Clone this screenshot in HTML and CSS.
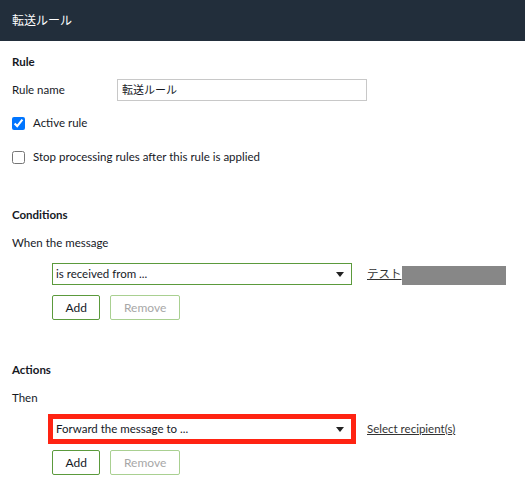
FILE: index.html
```html
<!DOCTYPE html>
<html lang="ja">
<head>
<meta charset="utf-8">
<title>転送ルール</title>
<link rel="stylesheet" href="styles.css">
</head>
<body>
<header class="topbar">転送ルール</header>
<main class="content">
  <section class="section first">
    <h2 class="heading">Rule</h2>
    <div class="field-row">
      <span class="field-label">Rule name</span>
      <div class="text-input">転送ルール</div>
    </div>
    <label class="check-row check-first">
      <input type="checkbox" class="check" checked>
      <span>Active rule</span>
    </label>
    <label class="check-row check-second">
      <input type="checkbox" class="check">
      <span>Stop processing rules after this rule is applied</span>
    </label>
  </section>

  <section class="section">
    <h2 class="heading">Conditions</h2>
    <p class="prompt">When the message</p>
    <div class="clause">
      <div class="select-row">
        <div class="select">
          <span>is received from ...</span>
          <svg class="caret" width="8" height="5" viewBox="0 0 8 5"><path d="M0 0H8L4 5Z" fill="#222"/></svg>
        </div>
        <a class="link" href="#">テスト</a><span class="redact"></span>
      </div>
      <div class="buttons">
        <button class="btn">Add</button>
        <button class="btn disabled">Remove</button>
      </div>
    </div>
  </section>

  <section class="section">
    <h2 class="heading">Actions</h2>
    <p class="prompt">Then</p>
    <div class="clause">
      <div class="select-row">
        <div class="select highlighted">
          <span>Forward the message to ...</span>
          <svg class="caret" width="8" height="5" viewBox="0 0 8 5"><path d="M0 0H8L4 5Z" fill="#222"/></svg>
        </div>
        <a class="link" href="#">Select recipient(s)</a>
      </div>
      <div class="buttons">
        <button class="btn">Add</button>
        <button class="btn disabled">Remove</button>
      </div>
    </div>
  </section>
</main>
</body>
</html>
```

FILE: styles.css
```css
* { box-sizing: border-box; }
html, body { margin: 0; padding: 0; background: #fff; }
body {
  font-family: Lato, "Noto Sans CJK JP", sans-serif;
  font-size: 11.5px;
  line-height: 16px;
  color: #16191f;
}
.topbar {
  height: 41px;
  background: #222e3b;
  color: #fff;
  font-size: 12px;
  display: flex;
  align-items: center;
  padding-left: 12px;
}
.content { padding: 0 12px; }
.section { margin-top: 42px; }
.section.first { margin-top: 13px; }
.heading {
  margin: 0;
  font-size: 11.5px;
  font-weight: 700;
  line-height: 16px;
}
.field-row {
  display: flex;
  align-items: center;
  margin-top: 9px;
}
.field-label { width: 105px; }
.text-input {
  width: 250px;
  height: 22px;
  border: 1px solid #c8c8c8;
  padding: 0 4px;
  display: flex;
  align-items: center;
  font-size: 11px;
}
.check-row {
  display: flex;
  align-items: center;
  gap: 8px;
}
.check-first { margin-top: 14px; }
.check-second { margin-top: 18px; }
.check {
  margin: 0;
  width: 13px;
  height: 13px;
}
.prompt { margin: 12px 0 0; }
.clause { padding-left: 40px; margin-top: 12px; }
.select-row {
  display: flex;
  align-items: center;
}
.select {
  width: 300px;
  height: 22px;
  border: 1px solid #5b9a3c;
  display: flex;
  align-items: center;
  justify-content: space-between;
  padding: 0 7px 0 3px;
}
.select.highlighted {
  outline: 5px solid #ff2312;
  outline-offset: -1px;
}
.caret { display: block; }
.link {
  margin-left: 15px;
  color: #333;
  text-decoration: underline;
}
.redact {
  display: inline-block;
  width: 104px;
  height: 19px;
  background: #878787;
  margin-top: 3px;
}
.buttons {
  display: flex;
  gap: 10px;
  margin-top: 10px;
}
.btn {
  font: inherit;
  font-size: 12px;
  height: 25px;
  padding: 0 12.5px;
  background: #fff;
  border: 1px solid #5b9a3c;
  border-radius: 2px;
  color: #16191f;
}
.btn.disabled {
  border-color: #a9d091;
  color: #a7a7a7;
}
```
